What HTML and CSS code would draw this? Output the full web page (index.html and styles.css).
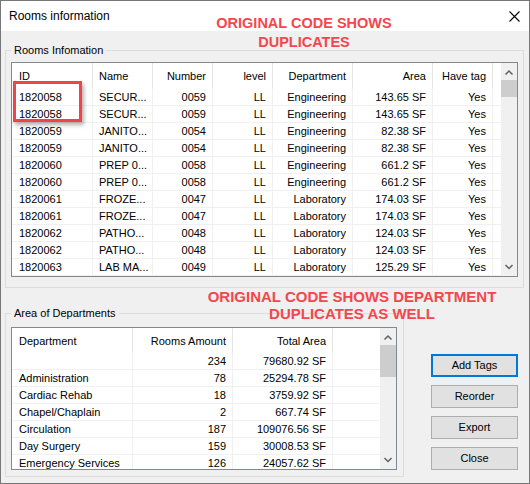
FILE: index.html
```html
<!DOCTYPE html>
<html>
<head>
<meta charset="utf-8">
<title>Rooms information</title>
<link rel="stylesheet" href="styles.css">
</head>
<body>
<div class="window">
  <div class="titlebar">
    <span class="title">Rooms information</span>
    <svg class="close" width="11" height="11" viewBox="0 0 11 11"><path d="M0.5 0.5L10.5 10.5M10.5 0.5L0.5 10.5" stroke="#000" stroke-width="1.1" fill="none"/></svg>
  </div>
  <div class="client">
    <fieldset class="group group-rooms">
      <legend>Rooms Infomation</legend>
      <div class="listview lv-rooms">
        <div class="lv-body">
          <table class="grid grid-rooms">
            <colgroup><col class="c81"><col class="c60"><col class="c60"><col class="c60"><col class="c80"><col class="c80"><col class="c60"><col class="c8"></colgroup>
            <thead>
              <tr><th class="first">ID</th><th>Name</th><th class="r">Number</th><th class="r">level</th><th class="r">Department</th><th class="r">Area</th><th class="r">Have tag</th><th class="pad"></th></tr>
            </thead>
            <tbody>
              <tr><td class="first">1820058</td><td>SECUR...</td><td class="r">0059</td><td class="r">LL</td><td class="r">Engineering</td><td class="r">143.65 SF</td><td class="r">Yes</td><td class="pad"></td></tr>
              <tr><td class="first">1820058</td><td>SECUR...</td><td class="r">0059</td><td class="r">LL</td><td class="r">Engineering</td><td class="r">143.65 SF</td><td class="r">Yes</td><td class="pad"></td></tr>
              <tr><td class="first">1820059</td><td>JANITO...</td><td class="r">0054</td><td class="r">LL</td><td class="r">Engineering</td><td class="r">82.38 SF</td><td class="r">Yes</td><td class="pad"></td></tr>
              <tr><td class="first">1820059</td><td>JANITO...</td><td class="r">0054</td><td class="r">LL</td><td class="r">Engineering</td><td class="r">82.38 SF</td><td class="r">Yes</td><td class="pad"></td></tr>
              <tr><td class="first">1820060</td><td>PREP 0...</td><td class="r">0058</td><td class="r">LL</td><td class="r">Engineering</td><td class="r">661.2 SF</td><td class="r">Yes</td><td class="pad"></td></tr>
              <tr><td class="first">1820060</td><td>PREP 0...</td><td class="r">0058</td><td class="r">LL</td><td class="r">Engineering</td><td class="r">661.2 SF</td><td class="r">Yes</td><td class="pad"></td></tr>
              <tr><td class="first">1820061</td><td>FROZE...</td><td class="r">0047</td><td class="r">LL</td><td class="r">Laboratory</td><td class="r">174.03 SF</td><td class="r">Yes</td><td class="pad"></td></tr>
              <tr><td class="first">1820061</td><td>FROZE...</td><td class="r">0047</td><td class="r">LL</td><td class="r">Laboratory</td><td class="r">174.03 SF</td><td class="r">Yes</td><td class="pad"></td></tr>
              <tr><td class="first">1820062</td><td>PATHO...</td><td class="r">0048</td><td class="r">LL</td><td class="r">Laboratory</td><td class="r">124.03 SF</td><td class="r">Yes</td><td class="pad"></td></tr>
              <tr><td class="first">1820062</td><td>PATHO...</td><td class="r">0048</td><td class="r">LL</td><td class="r">Laboratory</td><td class="r">124.03 SF</td><td class="r">Yes</td><td class="pad"></td></tr>
              <tr><td class="first">1820063</td><td>LAB MA...</td><td class="r">0049</td><td class="r">LL</td><td class="r">Laboratory</td><td class="r">125.29 SF</td><td class="r">Yes</td><td class="pad"></td></tr>
            </tbody>
          </table>
        </div>
        <div class="scrollbar sb-rooms">
          <div class="sb-btn"><svg width="16" height="17" viewBox="0 0 16 17"><polyline points="4.5,11.5 8,8 11.5,11.5" fill="none" stroke="#606060" stroke-width="1.5"/></svg></div>
          <div class="sb-thumb"></div>
          <div class="sb-track"></div>
          <div class="sb-btn"><svg width="16" height="17" viewBox="0 0 16 17"><polyline points="4.5,6 8,9.5 11.5,6" fill="none" stroke="#606060" stroke-width="1.5"/></svg></div>
        </div>
      </div>
    </fieldset>

    <div class="bottom">
      <fieldset class="group group-dept">
        <legend>Area of Departments</legend>
        <div class="listview lv-dept">
          <div class="lv-body">
            <table class="grid grid-dept">
              <colgroup><col class="c121"><col class="c100"><col class="c100"><col class="c47"></colgroup>
              <thead>
                <tr><th class="first">Department</th><th class="r">Rooms Amount</th><th class="r">Total Area</th><th class="pad"></th></tr>
              </thead>
              <tbody>
                <tr><td class="first"></td><td class="r">234</td><td class="r">79680.92 SF</td><td class="pad"></td></tr>
                <tr><td class="first">Administration</td><td class="r">78</td><td class="r">25294.78 SF</td><td class="pad"></td></tr>
                <tr><td class="first">Cardiac Rehab</td><td class="r">18</td><td class="r">3759.92 SF</td><td class="pad"></td></tr>
                <tr><td class="first">Chapel/Chaplain</td><td class="r">2</td><td class="r">667.74 SF</td><td class="pad"></td></tr>
                <tr><td class="first">Circulation</td><td class="r">187</td><td class="r">109076.56 SF</td><td class="pad"></td></tr>
                <tr><td class="first">Day Surgery</td><td class="r">159</td><td class="r">30008.53 SF</td><td class="pad"></td></tr>
                <tr><td class="first">Emergency Services</td><td class="r">126</td><td class="r">24057.62 SF</td><td class="pad"></td></tr>
              </tbody>
            </table>
          </div>
          <div class="scrollbar sb-dept">
            <div class="sb-btn"><svg width="16" height="17" viewBox="0 0 16 17"><polyline points="4.5,11.5 8,8 11.5,11.5" fill="none" stroke="#606060" stroke-width="1.5"/></svg></div>
            <div class="sb-thumb"></div>
            <div class="sb-track"></div>
            <div class="sb-btn"><svg width="16" height="17" viewBox="0 0 16 17"><polyline points="4.5,6 8,9.5 11.5,6" fill="none" stroke="#606060" stroke-width="1.5"/></svg></div>
          </div>
        </div>
      </fieldset>
      <div class="buttons">
        <button class="btn btn-default">Add Tags</button>
        <button class="btn">Reorder</button>
        <button class="btn">Export</button>
        <button class="btn">Close</button>
      </div>
    </div>
  </div>

  <div class="note note-top">ORIGINAL CODE SHOWS<br>DUPLICATES</div>
  <div class="note note-bottom">ORIGINAL CODE SHOWS DEPARTMENT<br>DUPLICATES AS WELL</div>
  <div class="highlight"></div>
</div>
</body>
</html>
```

FILE: styles.css
```css
* { box-sizing: border-box; }
html, body { margin: 0; padding: 0; background: #f0f0f0; }
body {
  font-family: "Liberation Sans", Arial, sans-serif;
  font-size: 11px;
  color: #000;
}
.window {
  position: relative;
  width: 530px;
  height: 484px;
  border: 1px solid #777;
  background: #f0f0f0;
  overflow: hidden;
}
.titlebar {
  height: 30px;
  background: #fff;
  display: flex;
  align-items: center;
  justify-content: space-between;
  padding: 0 9px 0 8px;
}
.title { font-size: 12px; }
.close { display: block; }

.client { padding: 12px 5px 0 4px; }

.group {
  margin: 0;
  border: 1px solid #dcdcdc;
  min-width: 0;
}
.group legend {
  padding: 0 3px;
  line-height: 14px;
  font-size: 11px;
}
.group-rooms { padding: 5px 5px 10px 5px; }
.group-dept { width: 399px; padding: 7px 6px 6px 5px; }

.listview {
  display: flex;
  border: 1px solid #828790;
  background: #fff;
  overflow: hidden;
}
.lv-rooms { height: 215px; }
.lv-dept { height: 143px; }
.lv-body { flex: 1; overflow: hidden; }

.grid {
  border-collapse: separate;
  border-spacing: 0;
  table-layout: fixed;
}
.grid-rooms { width: 489px; }
.grid-dept { width: 368px; }
.c81 { width: 81px; }
.c60 { width: 60px; }
.c80 { width: 80px; }
.c8 { width: 8px; }
.c121 { width: 121px; }
.c100 { width: 100px; }
.c47 { width: 47px; }

.grid th {
  font-weight: normal;
  text-align: left;
  line-height: 25px;
  height: 26px;
  padding: 0 6px;
  border-right: 1px solid #e5e5e5;
  white-space: nowrap;
  overflow: hidden;
}
.grid-dept th { line-height: 24px; height: 25px; }
.grid td {
  line-height: 16px;
  height: 17px;
  padding: 0 6px;
  border-bottom: 1px solid #f0f0f0;
  border-right: 1px solid #f0f0f0;
  white-space: nowrap;
  overflow: hidden;
}
.grid .first { padding-left: 7px; }
.grid .r { text-align: right; }
.grid th.pad { border-right: none; }
.grid td.pad { border-right: none; }

.scrollbar {
  width: 16px;
  flex: none;
  background: #f0f0f0;
  display: flex;
  flex-direction: column;
}
.sb-btn { height: 17px; flex: none; }
.sb-btn svg { display: block; }
.sb-thumb { background: #cdcdcd; flex: none; }
.sb-rooms .sb-thumb { height: 17px; }
.sb-dept .sb-thumb { height: 32px; }
.sb-track { flex: 1; }

.bottom {
  display: flex;
  align-items: flex-start;
  margin-top: 18px;
}
.buttons {
  display: flex;
  flex-direction: column;
  gap: 8px;
  margin-left: 27px;
  margin-top: 48px;
}
.btn {
  width: 87px;
  height: 23px;
  padding: 0;
  background: #e1e1e1;
  border: 1px solid #adadad;
  font-family: "Liberation Sans", Arial, sans-serif;
  font-size: 11px;
  color: #000;
  line-height: 19px;
}
.btn-default { border: 2px solid #0078d7; }

.note {
  position: absolute;
  width: 320px;
  text-align: center;
  color: #f3474d;
  font-weight: bold;
  white-space: nowrap;
}
.note-top {
  left: 143px;
  top: 13px;
  font-size: 14.5px;
  line-height: 18.5px;
}
.note-bottom {
  left: 191px;
  top: 287px;
  font-size: 15px;
  line-height: 17px;
}
.highlight {
  position: absolute;
  left: 12px;
  top: 80px;
  width: 69px;
  height: 41px;
  border: 3px solid #f0444b;
  box-shadow: 2px 3px 4px rgba(0, 0, 0, 0.3);
}
```
